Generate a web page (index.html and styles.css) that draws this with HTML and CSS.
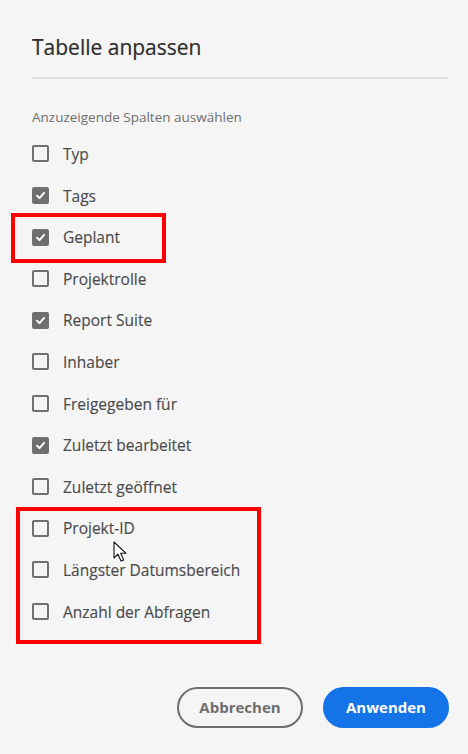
FILE: index.html
```html
<!DOCTYPE html>
<html lang="de">
<head>
<meta charset="utf-8">
<link rel="stylesheet" href="styles.css">
</head>
<body>
<div class="dialog">
  <h1 class="title">Tabelle anpassen</h1>
  <div class="divider"></div>
  <p class="subtitle">Anzuzeigende Spalten auswählen</p>
  <ul class="list">
    <li class="row"><span class="box"></span><span class="label">Typ</span></li>
    <li class="row"><span class="box checked"><svg viewBox="0 0 16 16"><polyline points="3.6,8.2 6.8,11.2 12.4,4.8"/></svg></span><span class="label">Tags</span></li>
    <li class="row"><span class="box checked"><svg viewBox="0 0 16 16"><polyline points="3.6,8.2 6.8,11.2 12.4,4.8"/></svg></span><span class="label">Geplant</span></li>
    <li class="row"><span class="box"></span><span class="label">Projektrolle</span></li>
    <li class="row"><span class="box checked"><svg viewBox="0 0 16 16"><polyline points="3.6,8.2 6.8,11.2 12.4,4.8"/></svg></span><span class="label">Report Suite</span></li>
    <li class="row"><span class="box"></span><span class="label">Inhaber</span></li>
    <li class="row"><span class="box"></span><span class="label">Freigegeben für</span></li>
    <li class="row"><span class="box checked"><svg viewBox="0 0 16 16"><polyline points="3.6,8.2 6.8,11.2 12.4,4.8"/></svg></span><span class="label">Zuletzt bearbeitet</span></li>
    <li class="row"><span class="box"></span><span class="label">Zuletzt geöffnet</span></li>
    <li class="row"><span class="box"></span><span class="label">Projekt-ID</span></li>
    <li class="row"><span class="box"></span><span class="label">Längster Datumsbereich</span></li>
    <li class="row"><span class="box"></span><span class="label">Anzahl der Abfragen</span></li>
  </ul>
  <div class="actions">
    <button class="btn secondary">Abbrechen</button>
    <button class="btn primary">Anwenden</button>
  </div>
</div>
<div class="highlight hl-one"></div>
<div class="highlight hl-two"></div>
<svg class="cursor" viewBox="0 0 14 22" width="14" height="22">
  <path d="M1 1 L1 17 L5 13.2 L8 20 L10.6 18.9 L7.7 12.3 L13 12.3 Z" fill="#fff" stroke="#111" stroke-width="1.1" stroke-linejoin="round"/>
</svg>
</body>
</html>
```

FILE: styles.css
```css
html, body {
  margin: 0;
  padding: 0;
  background: #f5f5f5;
}
body {
  width: 468px;
  height: 754px;
  position: relative;
  overflow: hidden;
  font-family: "Open Sans", "Noto Sans", sans-serif;
}
.dialog {
  padding: 34px 20px 0 32px;
}
.title {
  margin: 0;
  font-size: 21px;
  line-height: 26px;
  font-weight: 400;
  color: #2c2c2c;
  -webkit-text-stroke: 0.2px #2c2c2c;
}
.divider {
  margin-top: 17px;
  height: 2px;
  background: #e1e1e1;
}
.subtitle {
  margin: 29px 0 0;
  font-size: 13.5px;
  line-height: 18px;
  color: #6e6e6e;
}
.list {
  list-style: none;
  margin: 7.2px 0 0;
  padding: 0;
}
.row {
  height: 41.6px;
  display: flex;
  align-items: center;
  gap: 14px;
}
.box {
  width: 17px;
  height: 17px;
  box-sizing: border-box;
  border: 2px solid #707070;
  border-radius: 2px;
  display: flex;
  align-items: center;
  justify-content: center;
  flex: none;
}
.box.checked {
  background: #6e6e6e;
}
.box svg {
  width: 15px;
  height: 15px;
}
.box polyline {
  fill: none;
  stroke: #fff;
  stroke-width: 2.4;
  stroke-linecap: round;
  stroke-linejoin: round;
}
.label {
  font-size: 15.5px;
  color: #4b4b4b;
  line-height: 20px;
  -webkit-text-stroke: 0.15px #4b4b4b;
}
.actions {
  margin-top: 54.6px;
  margin-right: -1px;
  display: flex;
  justify-content: flex-end;
  gap: 20px;
}
.btn {
  width: 126px;
  height: 41px;
  border-radius: 21px;
  font-family: "Open Sans", "Noto Sans", sans-serif;
  font-size: 15px;
  font-weight: 700;
  box-sizing: border-box;
  cursor: pointer;
}
.secondary {
  background: transparent;
  border: 2px solid #6e6e6e;
  color: #6e6e6e;
}
.primary {
  background: #1473e6;
  border: 2px solid #1473e6;
  color: #fff;
}
.highlight {
  position: absolute;
  border: 4px solid #ff0000;
  box-sizing: border-box;
}
.hl-one {
  left: 11px;
  top: 213px;
  width: 155px;
  height: 50px;
}
.hl-two {
  left: 16px;
  top: 507px;
  width: 245px;
  height: 137px;
}
.cursor {
  position: absolute;
  left: 113px;
  top: 541px;
}
```
